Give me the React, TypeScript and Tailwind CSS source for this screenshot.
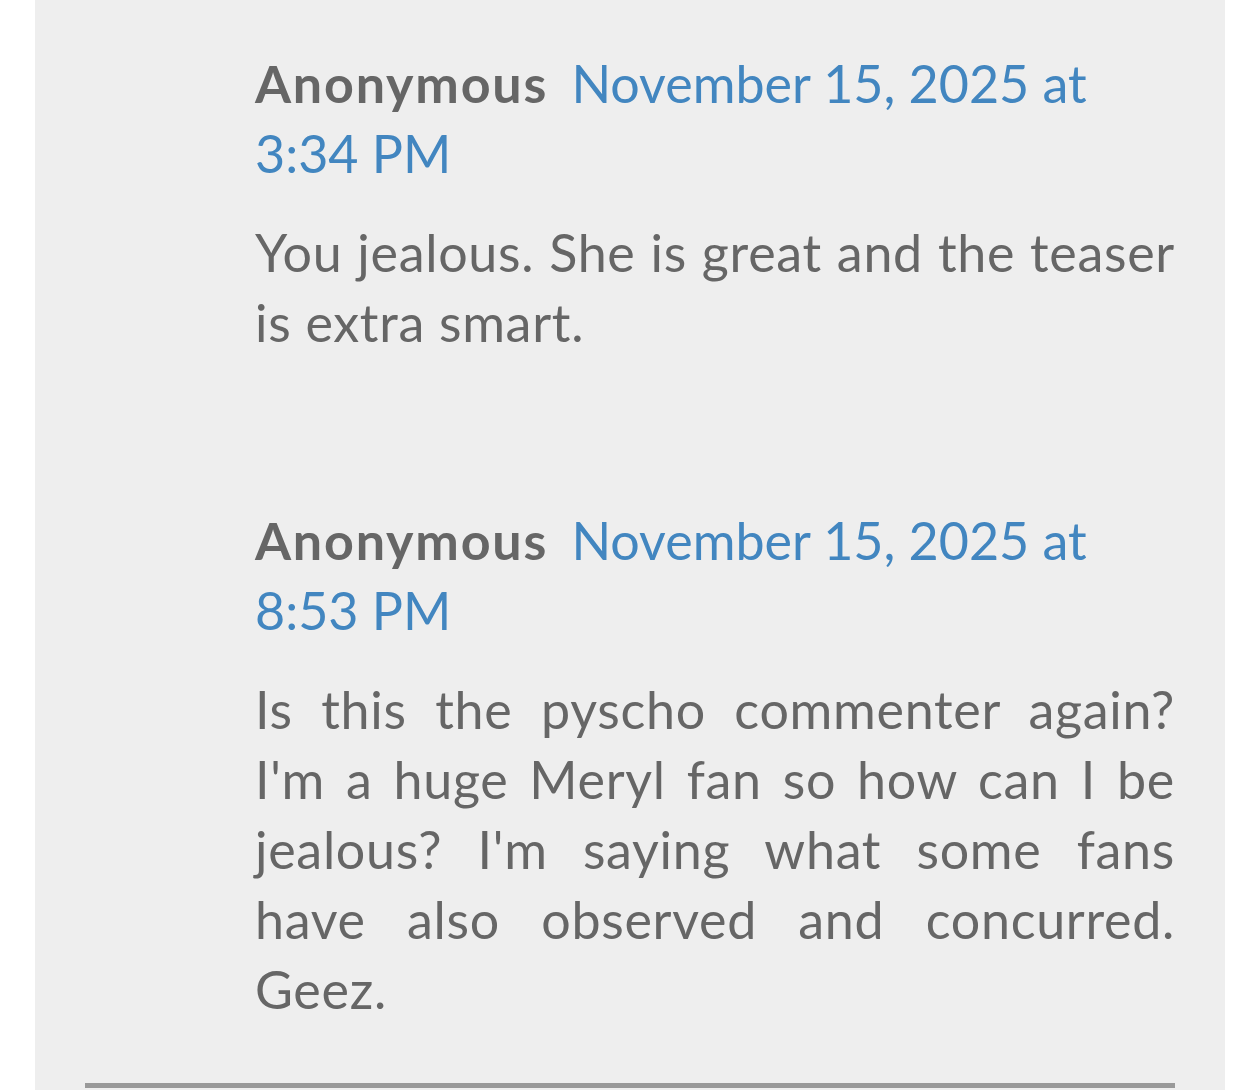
const comments = [
  {
    author: 'Anonymous',
    date: 'November 15, 2025 at 3:34 PM',
    body: 'You jealous. She is great and the teaser is extra smart.',
  },
  {
    author: 'Anonymous',
    date: 'November 15, 2025 at 8:53 PM',
    body: "Is this the pyscho commenter again? I'm a huge Meryl fan so how can I be jealous? I'm saying what some fans have also observed and concurred. Geez.",
  },
];

export default function App() {
  return (
    <div className="min-h-[1090px] bg-white px-[35px] font-['Lato',sans-serif]">
      <div className="min-h-[1090px] bg-[#eeeeee] px-[50px] pt-[48px]">
        <div className="flex flex-col gap-[148px] pl-[170px]">
          {comments.map((c, i) => (
            <div key={i} className="text-[52px] leading-[70px] text-[#666666]">
              <div>
                <span className="font-bold tracking-[1.8px]">{c.author}</span>{' '}
                <a className="ml-[10px] text-[#4286c0]">{c.date}</a>
              </div>
              <p className="mt-[29px] text-justify tracking-[0.7px]">{c.body}</p>
            </div>
          ))}
        </div>
        <div className="mt-[59px] h-[5px] bg-[#999999]" />
      </div>
    </div>
  );
}
